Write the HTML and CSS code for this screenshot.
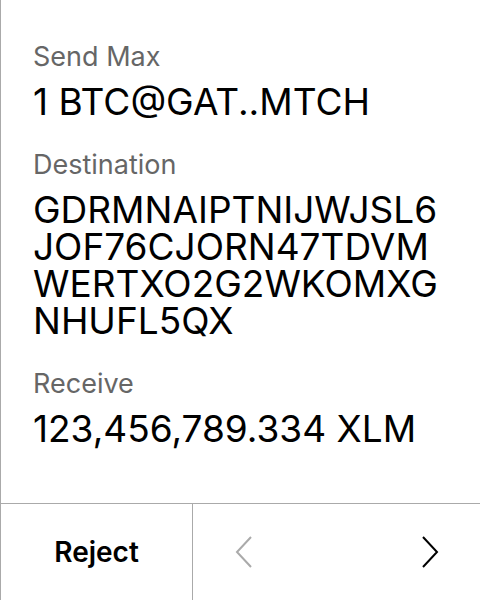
FILE: index.html
```html
<!DOCTYPE html>
<html>
<head>
<meta charset="utf-8">
<link rel="stylesheet" href="styles.css">
</head>
<body>
<div class="screen">
  <div class="content">
    <div class="field">
      <div class="label">Send Max</div>
      <div class="value">1 BTC@GAT..MTCH</div>
    </div>
    <div class="field">
      <div class="label">Destination</div>
      <div class="value">GDRMNAIPTNIJWJSL6<br>JOF76CJORN47TDVM<br>WERTXO2G2WKOMXG<br>NHUFL5QX</div>
    </div>
    <div class="field">
      <div class="label">Receive</div>
      <div class="value">123,456,789.334 XLM</div>
    </div>
  </div>
  <div class="actions">
    <div class="reject">Reject</div>
    <div class="nav">
      <svg class="chev chev-prev" width="18" height="32" viewBox="0 0 18 32"><path d="M16 1 L2 16 L16 31" fill="none" stroke="#aaaaaa" stroke-width="2"/></svg>
      <svg class="chev chev-next" width="18" height="32" viewBox="0 0 18 32"><path d="M2 1 L16 16 L2 31" fill="none" stroke="#000000" stroke-width="2"/></svg>
    </div>
  </div>
</div>
</body>
</html>
```
FILE: styles.css
```css
html, body {
  margin: 0;
  padding: 0;
  background: #ffffff;
}
body {
  font-family: Inter, "Noto Sans", sans-serif;
  color: #000;
}
.screen {
  width: 480px;
  height: 600px;
  box-sizing: border-box;
  border-left: 1px solid #aaaaaa;
  display: flex;
  flex-direction: column;
}
.content {
  flex: 1;
  padding: 41px 0 0 32px;
  display: flex;
  flex-direction: column;
  gap: 29px;
}
.field {
  display: flex;
  flex-direction: column;
  gap: 10px;
}
.label {
  font-size: 27px;
  line-height: 32px;
  color: #666666;
}
.value {
  font-size: 37px;
  line-height: 37px;
}
.actions {
  height: 96px;
  border-top: 1px solid #aaaaaa;
  display: flex;
}
.reject {
  width: 191px;
  border-right: 1px solid #aaaaaa;
  display: flex;
  align-items: center;
  justify-content: center;
  font-size: 28px;
  font-weight: 600;
}
.nav {
  flex: 1;
  display: flex;
  align-items: center;
  justify-content: space-between;
  padding: 0 41px 0 42px;
}
.chev {
  display: block;
}
```
